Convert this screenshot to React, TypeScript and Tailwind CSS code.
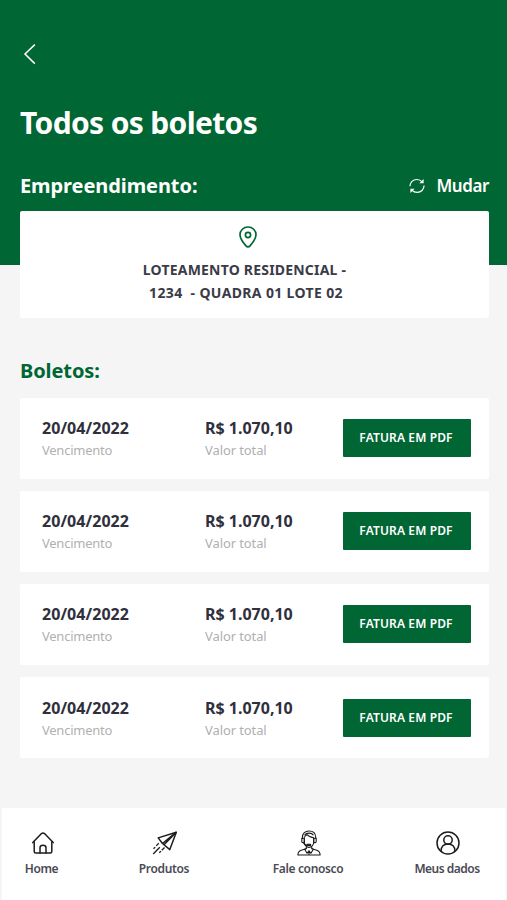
import type { ReactNode } from 'react'

interface Boleto {
  id: number
  dueDate: string
  total: string
}

interface NavItemProps {
  label: string
  icon: ReactNode
  className: string
  labelClassName: string
}

const boletos: Boleto[] = [
  { id: 1, dueDate: '20/04/2022', total: 'R$ 1.070,10' },
  { id: 2, dueDate: '20/04/2022', total: 'R$ 1.070,10' },
  { id: 3, dueDate: '20/04/2022', total: 'R$ 1.070,10' },
  { id: 4, dueDate: '20/04/2022', total: 'R$ 1.070,10' },
]

function BackIcon() {
  return (
    <svg className="h-[22px] w-[14px]" viewBox="0 0 14 22" fill="none" stroke="currentColor" strokeWidth="1.5">
      <path d="M11.8 1.6 2 11l9.8 9.6" />
    </svg>
  )
}

function RefreshIcon() {
  return (
    <svg className="h-4 w-4" viewBox="0 0 16 16" fill="none" stroke="currentColor" strokeWidth="1.2">
      <path d="M.9 8.2C1 4.3 4 1.5 7.8 1.5c2.2 0 4 .8 5.300 2.300" />
      <path d="M15.100 7.600c-.1 3.900-3.100 6.800-6.900 6.800-2.200 0-4-.8-5.300-2.300" />
      <path d="M14.600 1v4.300h-4.200z" fill="currentColor" stroke="none" />
      <path d="M1.400 15v-4.300h4.200z" fill="currentColor" stroke="none" />
    </svg>
  )
}

function PinIcon() {
  return (
    <svg className="h-[22px] w-[18px]" viewBox="0 0 18 22" fill="none" stroke="currentColor" strokeWidth="1.7">
      <path d="M9 1C4.5 1 1 4.4 1 8.700c0 3.800 3.200 8 6 11.200 1.200 1.400 2.800 1.400 4 0 2.800-3.200 6-7.400 6-11.200C17 4.400 13.500 1 9 1z" />
      <circle cx="9" cy="9" r="2.6" />
    </svg>
  )
}

function HomeIcon() {
  return (
    <svg className="h-[22px] w-[22px]" viewBox="0 0 22 22" fill="none" stroke="currentColor" strokeWidth="1.5" strokeLinejoin="round" strokeLinecap="round">
      <path d="M.8 10.600 9.500 1.600q1.500-1.300 3 0l8.700 9" />
      <path d="M2.200 9.700v9.900q0 1.500 1.500 1.500h14.600q1.500 0 1.500-1.500V9.700" />
      <path d="M8 21v-5.200q0-2.500 3-2.500t3 2.500V21" />
    </svg>
  )
}

function PlaneIcon() {
  return (
    <svg className="h-6 w-[26px]" viewBox="0 0 26 24" fill="none" stroke="currentColor" strokeWidth="1.5" strokeLinejoin="round">
      <path d="M24.300 1.200 6.200 6.900l4.300 5.600 7.300 6.100z" />
      <path d="M24.300 1.200 10.500 12.500M24.300 1.200 12 13.700" />
      <path d="m1.200 23 6.600-6.700M7.300 21.800l1.700-1.700M9.800 19.300l2.700-2.800M1.500 17.800l1.700-1.700M4.200 14.900l2.600-2.600" strokeWidth="1.3" />
    </svg>
  )
}

function AgentIcon() {
  return (
    <svg className="h-[26px] w-6" viewBox="0 0 24 26" fill="none" stroke="currentColor" strokeWidth="1.1" strokeLinejoin="round">
      <path d="M5.400 9V7.500C5.400 3.300 8.200 1 12 1s6.700 2.300 6.700 6.500V9" />
      <path d="M7.300 8v4.200c0 3 2.300 5.300 4.700 5.300s4.700-2.300 4.700-5.300V8" />
      <path d="M7.300 7.800c.2-1.800 1.200-2.500 2.900-3.100 1.700 2 3.900 2.900 6.700 3M7.500 5.200C9.300 2.500 14.700 2.300 16.500 5.200" />
      <path d="M4.800 8.200h2.500v4.400H5.900q-1.100 0-1.100-1.200zM16.700 8.200h2.500v3.200q0 1.200-1.100 1.200h-1.400z" />
      <path d="M6.600 12.700c.7 1.900 2 2.500 3.800 2.500h2.100" />
      <path d="M10.200 14.300h3.400v1.500h-3.400z" fill="currentColor" />
      <path d="M9.300 16.700v2L4.200 20.200C2 21 .9 22.600.9 25h22.200c0-2.400-1.100-4-3.300-4.800l-5.100-1.500v-2" />
      <path d="m9.300 18.500-1.700.8 2.500 4 1.900-2.600 1.900 2.600 2.500-4-1.700-.8M12 20.700V25" />
    </svg>
  )
}

function UserIcon() {
  return (
    <svg className="h-6 w-6" viewBox="0 0 24 24" fill="none" stroke="currentColor" strokeWidth="1.5">
      <circle cx="12" cy="12" r="11" />
      <circle cx="12" cy="8.900" r="4.200" />
      <path d="M5 20.200c.2-4.500 3-7.100 7-7.100s6.800 2.600 7 7.100" />
    </svg>
  )
}

function BoletoCard({ boleto }: { boleto: Boleto }) {
  return (
    <li className="flex h-[81px] items-center rounded-[2px] bg-white pr-[18px] pl-[22px]">
      <div className="w-[163px] pt-[2px]">
        <p className="text-[16px] leading-[22px] font-bold tracking-[0.05px] text-[#30303d]">{boleto.dueDate}</p>
        <p className="text-[13px] leading-[22px] tracking-[-0.25px] text-[#b0b0b0]">Vencimento</p>
      </div>
      <div className="flex-1 pt-[2px]">
        <p className="text-[16px] leading-[22px] font-bold text-[#30303d]">{boleto.total}</p>
        <p className="text-[13px] leading-[22px] tracking-[-0.1px] text-[#b0b0b0]">Valor total</p>
      </div>
      <button className="h-[38px] w-[128px] rounded-[1px] bg-[#006633] pr-[2px] text-[12px] font-semibold tracking-[0.12px] whitespace-nowrap text-white">
        FATURA EM PDF
      </button>
    </li>
  )
}

function NavItem({ label, icon, className, labelClassName }: NavItemProps) {
  return (
    <a className={`flex shrink-0 flex-col items-center ${className}`}>
      <span className="flex h-[28px] items-center pl-[2px] text-[#1d1d1d]">{icon}</span>
      <span className={`mt-[3px] text-[12px] leading-[18px] font-semibold whitespace-nowrap text-[#4a4a55] ${labelClassName}`}>{label}</span>
    </a>
  )
}

export default function App() {
  return (
    <div className="flex h-[900px] w-[507px] flex-col overflow-hidden bg-[#f5f5f5] font-['Noto_Sans','Open_Sans',sans-serif]">
      <header className="h-[265px] shrink-0 bg-[#006633] pt-[43px] pr-[18px] pl-5 text-white">
        <button className="ml-[3px] block">
          <BackIcon />
        </button>
        <h1 className="mt-[38px] text-[30px] leading-[40px] font-bold tracking-[-0.65px]">Todos os boletos</h1>
        <div className="mt-[28px] flex h-[30px] items-center justify-between">
          <h2 className="text-[20px] leading-[30px] font-bold tracking-[-0.08px]">Empreendimento:</h2>
          <button className="flex items-center gap-[11px] text-[17px] leading-[30px] font-semibold tracking-[-0.4px]">
            <RefreshIcon />
            <span>Mudar</span>
          </button>
        </div>
      </header>

      <main className="-mt-[54px] flex-1 pr-[18px] pl-5">
        <section className="flex h-[107px] flex-col items-center rounded-[2px] bg-white pt-[15px] text-center">
          <div className="pr-[13px] text-[#006633]">
            <PinIcon />
          </div>
          <p className="mt-[11px] pr-[20px] text-[14px] leading-[22.5px] font-bold tracking-[0.2px] whitespace-pre text-[#3b3b47]">
            <span className="block">LOTEAMENTO RESIDENCIAL -</span>
            <span className="block pl-[3px] tracking-[0.36px]">{'1234  - QUADRA 01 LOTE 02'}</span>
          </p>
        </section>

        <h2 className="mt-[38px] text-[20px] leading-[30px] font-bold tracking-[-0.1px] text-[#006633]">Boletos:</h2>
        <ul className="mt-[11.6px] flex flex-col gap-[12.2px]">
          {boletos.map((boleto) => (
            <BoletoCard key={boleto.id} boleto={boleto} />
          ))}
        </ul>
      </main>

      <nav className="mr-px ml-[2px] flex h-[92px] shrink-0 bg-white pt-[21px]">
        <NavItem label="Home" icon={<HomeIcon />} className="w-[79px]" labelClassName="tracking-[-0.4px]" />
        <NavItem label="Produtos" icon={<PlaneIcon />} className="w-[166px]" labelClassName="tracking-[-0.35px]" />
        <NavItem label="Fale conosco" icon={<AgentIcon />} className="w-[122px]" labelClassName="tracking-[-0.35px]" />
        <NavItem label="Meus dados" icon={<UserIcon />} className="ml-[38px] w-[80px]" labelClassName="tracking-[-0.5px]" />
      </nav>
    </div>
  )
}
